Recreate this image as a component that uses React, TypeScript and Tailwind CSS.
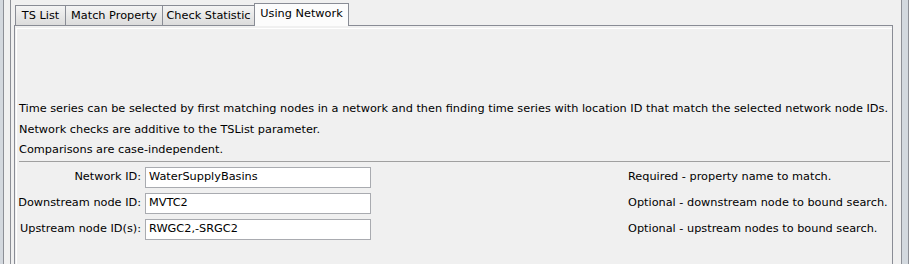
const tabs = [
  { label: "TS List", w: "w-[50px]" },
  { label: "Match Property", w: "w-[97px]" },
  { label: "Check Statistic", w: "w-[92px]" },
];

const fields = [
  {
    label: "Network ID:",
    value: "WaterSupplyBasins",
    note: "Required - property name to match.",
  },
  {
    label: "Downstream node ID:",
    value: "MVTC2",
    note: "Optional - downstream node to bound search.",
  },
  {
    label: "Upstream node ID(s):",
    value: "RWGC2,-SRGC2",
    note: "Optional - upstream nodes to bound search.",
  },
];

export default function App() {
  return (
    <div className="w-[909px] h-[264px] overflow-hidden bg-[#f0f0f0] flex text-[11.3px] text-black font-['DejaVu_Sans',sans-serif]">
      {/* left edge of neighbouring pane */}
      <div className="w-[3px] bg-[#d3d8de]" />
      <div className="w-px bg-[#8c8f96]" />
      <div className="w-[6px]" />
      <div className="w-px bg-[#8c8f96]" />

      <div className="w-[886px] pl-[3px] flex flex-col">
        {/* tab strip */}
        <div className="h-[25px] flex items-end pl-px">
          {tabs.map((t) => (
            <div
              key={t.label}
              className={`${t.w} h-[20px] border-l border-t border-[#898c95] bg-gradient-to-b from-[#f4f4f4] to-[#dcdcdc] flex items-center justify-center pt-px`}
            >
              {t.label}
            </div>
          ))}
          <div className="w-[95px] h-[23px] -mb-px relative z-10 border-x border-t border-[#898c95] bg-[#fcfcfc] flex items-center justify-center pb-[2px]">
            Using Network
          </div>
        </div>

        {/* tab panel */}
        <div className="w-[879px] flex-1 border-t border-l border-r border-[#898c95] pt-[2px] pl-px">
          <div className="h-full border-t border-l border-white pl-px">
            <div className="h-[70px]" />
            <div className="leading-[20px] pl-px">
              <div className="h-[21px]">
                Time series can be selected by first matching nodes in a network and then finding time series with location ID that match the selected network node IDs.
              </div>
              <div className="h-[20px]">Network checks are additive to the TSList parameter.</div>
              <div className="h-[20px]">Comparisons are case-independent.</div>
            </div>
            <div className="h-px bg-[#a0a0a0] ml-px mr-[2px] mt-px" />
            <div className="mt-[5px] flex flex-col gap-[5px]">
              {fields.map((f) => (
                <div key={f.label} className="flex items-center h-[21px]">
                  <div className="w-[127px] text-right pr-[4px] whitespace-nowrap">{f.label}</div>
                  <div className="w-[226px] h-[21px] border border-[#a9abb0] bg-white flex items-center pl-[3px]">
                    {f.value}
                  </div>
                  <div className="ml-[257px] whitespace-nowrap">{f.note}</div>
                </div>
              ))}
            </div>
          </div>
        </div>
      </div>

      <div className="w-[5px]" />
      <div className="w-px bg-[#8c8f96]" />
      <div className="w-[6px] bg-[#d3d9df]" />
      <div className="w-px bg-[#8c8f96]" />
      <div className="flex-1 bg-[#e4e6e9]" />
    </div>
  );
}
